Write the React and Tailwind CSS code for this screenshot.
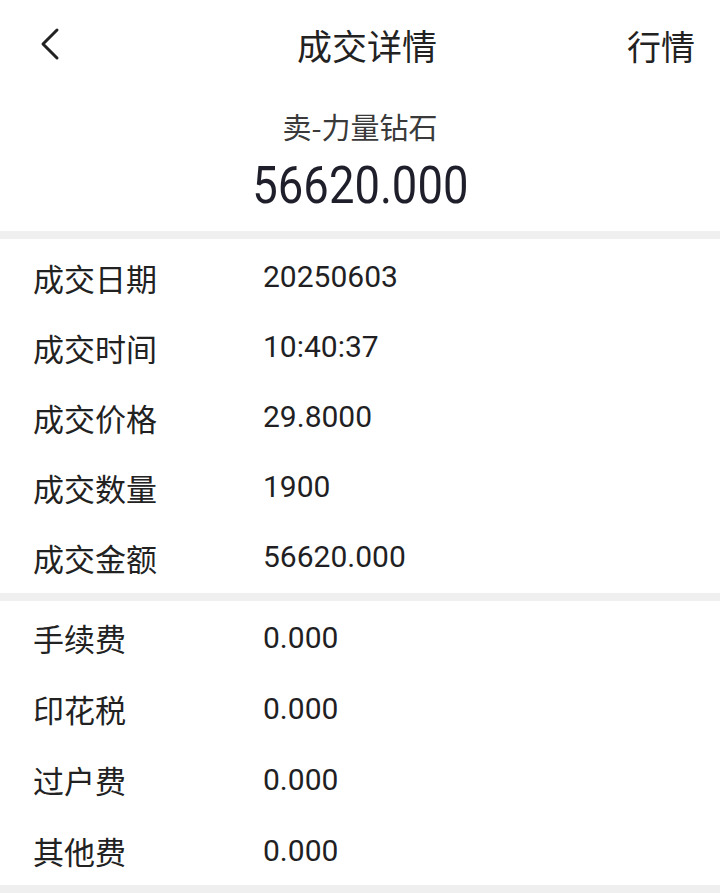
export default function App() {
  const rows1 = [
    ["成交日期", "20250603"],
    ["成交时间", "10:40:37"],
    ["成交价格", "29.8000"],
    ["成交数量", "1900"],
    ["成交金额", "56620.000"],
  ];
  const rows2 = [
    ["手续费", "0.000"],
    ["印花税", "0.000"],
    ["过户费", "0.000"],
    ["其他费", "0.000"],
  ];
  const cjk = { fontFamily: '"Noto Sans CJK SC", "Noto Sans", sans-serif' };
  const num = { fontFamily: 'Roboto, "Noto Sans CJK SC", sans-serif' };
  const Row = ({ l, v, h }) => (
    <div className={`flex items-center ${h}`}>
      <div className="w-[263px] pl-[33px] text-[31px] text-[#222] leading-none" style={cjk}>{l}</div>
      <div className="text-[30px] text-[#1f1f24] leading-none" style={num}>{v}</div>
    </div>
  );
  return (
    <div className="w-[720px] h-[893px] bg-white overflow-hidden flex flex-col">
      <div className="h-[90px] flex items-center justify-between px-[25px] relative">
        <svg width="40" height="40" viewBox="0 0 40 40" className="ml-[10px]">
          <path d="M22 5 L8 19 L22 33" fill="none" stroke="#222" strokeWidth="3" strokeLinecap="round" strokeLinejoin="round" />
        </svg>
        <div className="absolute left-0 right-0 pl-[14px] text-center text-[35px] text-[#222] pointer-events-none" style={cjk}>成交详情</div>
        <div className="text-[34px] text-[#222]" style={cjk}>行情</div>
      </div>
      <div className="h-[141px] flex flex-col items-center">
        <div className="mt-[22px] text-[29px] text-[#3a3a3a] leading-none" style={cjk}>卖-力量钻石</div>
        <div className="mt-[19px] text-[51px] text-[#1e1f2a] leading-none inline-block scale-x-[0.89]" style={num}>56620.000</div>
      </div>
      <div className="h-[8px] bg-[#efefef]"></div>
      <div className="pt-[3px] h-[354px]">
        {rows1.map(([l, v]) => <Row key={l} l={l} v={v} h="h-[70px]" />)}
      </div>
      <div className="h-[8px] bg-[#efefef]"></div>
      <div className="pt-[1px] h-[284px]">
        {rows2.map(([l, v]) => <Row key={l} l={l} v={v} h="h-[71px]" />)}
      </div>
      <div className="h-[8px] bg-[#efefef]"></div>
    </div>
  );
}
